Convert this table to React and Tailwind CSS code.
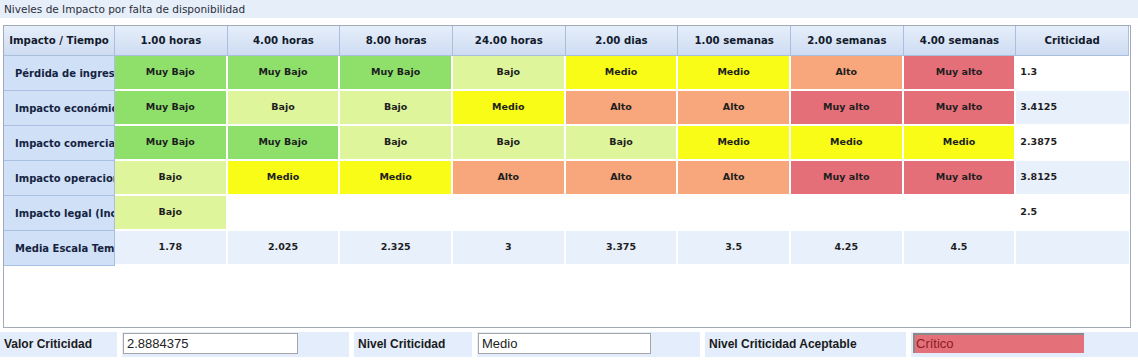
import React from "react";

const COLORS = {
  MB: { bg: "bg-[#8fe06b]", label: "Muy Bajo" },
  B: { bg: "bg-[#dff59b]", label: "Bajo" },
  M: { bg: "bg-[#f8fc17]", label: "Medio" },
  A: { bg: "bg-[#f8a77c]", label: "Alto" },
  MA: { bg: "bg-[#e56f79]", label: "Muy alto" },
};

const headers = [
  "1.00 horas",
  "4.00 horas",
  "8.00 horas",
  "24.00 horas",
  "2.00 dias",
  "1.00 semanas",
  "2.00 semanas",
  "4.00 semanas",
  "Criticidad",
];

const rows = [
  { label: "Pérdida de ingresos", cells: ["MB", "MB", "MB", "B", "M", "M", "A", "MA"], crit: "1.3", alt: false },
  { label: "Impacto económico", cells: ["MB", "B", "B", "M", "A", "A", "MA", "MA"], crit: "3.4125", alt: true },
  { label: "Impacto comercial", cells: ["MB", "MB", "B", "B", "B", "M", "M", "M"], crit: "2.3875", alt: false },
  { label: "Impacto operacional", cells: ["B", "M", "M", "A", "A", "A", "MA", "MA"], crit: "3.8125", alt: true },
  { label: "Impacto legal (Incumplimiento)", cells: ["B", null, null, null, null, null, null, null], crit: "2.5", alt: false },
];

const media = ["1.78", "2.025", "2.325", "3", "3.375", "3.5", "4.25", "4.5"];

const font = { fontFamily: '"DejaVu Sans", Verdana, sans-serif' };

function LabelCell({ children }) {
  return (
    <div className="h-[35px] bg-[#cfe0f7] border-b border-r border-[#a6bfe2] flex items-center pl-[11px] overflow-hidden whitespace-nowrap text-[10px] font-bold text-[#15233f]">
      {children}
    </div>
  );
}

export default function App() {
  return (
    <div className="w-[1138px] h-[361px] bg-white relative overflow-hidden" style={font}>
      <div className="h-[18px] bg-[#e6eef9] pl-[4px] text-[10.5px] leading-[18px] text-[#2a2f3a]">
        Niveles de Impacto por falta de disponibilidad
      </div>
      <div className="mt-[7px] ml-[3px] w-[1128px] h-[303px] border border-[#a3abb8] bg-white">
        <div className="w-[1125px] grid grid-cols-[111px_repeat(9,1fr)]">
          <div className="h-[30px] bg-gradient-to-b from-[#e6eefa] to-[#cedcf2] border-r border-b border-[#a9bfdd] flex items-center justify-center text-[10.2px] font-bold text-[#121a2c]">
            Impacto / Tiempo
          </div>
          {headers.map((h) => (
            <div
              key={h}
              className="h-[30px] bg-gradient-to-b from-[#e6eefa] to-[#cedcf2] border-r border-b border-[#a9bfdd] flex items-center justify-center text-[10.2px] font-bold text-[#121a2c]"
            >
              {h}
            </div>
          ))}

          {rows.map((r) => (
            <React.Fragment key={r.label}>
              <LabelCell>{r.label}</LabelCell>
              {r.cells.map((c, i) =>
                c ? (
                  <div
                    key={i}
                    className={`h-[35px] border-b-2 border-r-2 border-white flex items-center justify-center text-[9.5px] font-bold text-[#1e1e1e] ${COLORS[c].bg}`}
                  >
                    {COLORS[c].label}
                  </div>
                ) : (
                  <div key={i} className="h-[35px] bg-white" />
                )
              )}
              <div
                className={`h-[35px] border-b-2 border-white flex items-center pl-[4px] text-[9.5px] font-bold text-[#1e1e1e] ${
                  r.alt ? "bg-[#e8f0fb]" : "bg-white"
                }`}
              >
                {r.crit}
              </div>
            </React.Fragment>
          ))}

          <LabelCell>Media Escala Temporal</LabelCell>
          {media.map((m, i) => (
            <div
              key={i}
              className="h-[35px] bg-[#e8f0fb] border-r-2 border-b-2 border-white flex items-center justify-center text-[9.5px] font-bold text-[#1e1e1e]"
            >
              {m}
            </div>
          ))}
          <div className="h-[35px] bg-[#e8f0fb] border-b-2 border-white" />
        </div>
      </div>

      <div
        className="mt-[4px] h-[25px] flex gap-[5px] text-[12px]"
        style={{ fontFamily: '"Liberation Sans", Arial, sans-serif' }}
      >
        <div className="w-[117px] bg-[#e3edfb] flex items-center pl-[4px] pb-[1px] font-bold text-[#1a1a1a]">Valor Criticidad</div>
        <div className="w-[227px] bg-[#e3edfb] pt-[1px] pl-[1px]">
          <div className="w-[175px] h-[21px] bg-white border border-[#a5a5a5] pl-[3px] text-[13px] leading-[19px] text-[#222]">
            2.8884375
          </div>
        </div>
        <div className="w-[118px] bg-[#e3edfb] flex items-center pl-[4px] pb-[1px] font-bold text-[#1a1a1a]">Nivel Criticidad</div>
        <div className="w-[223px] bg-[#e3edfb] pt-[1px] pl-[1px]">
          <div className="w-[173px] h-[21px] bg-white border border-[#a5a5a5] pl-[3px] text-[13px] leading-[19px] text-[#222]">
            Medio
          </div>
        </div>
        <div className="w-[201px] bg-[#e3edfb] flex items-center pl-[4px] pb-[1px] font-bold text-[#1a1a1a]">Nivel Criticidad Aceptable</div>
        <div className="flex-1 bg-[#e3edfb] pt-[1px] pl-[2px]">
          <div className="w-[171px] h-[20px] bg-[#e4707a] border-t-2 border-l-2 border-[#8a8a8a] pl-[1px] text-[13px] leading-[17px] text-[#8b1c22]">
            Crítico
          </div>
        </div>
      </div>
    </div>
  );
}
